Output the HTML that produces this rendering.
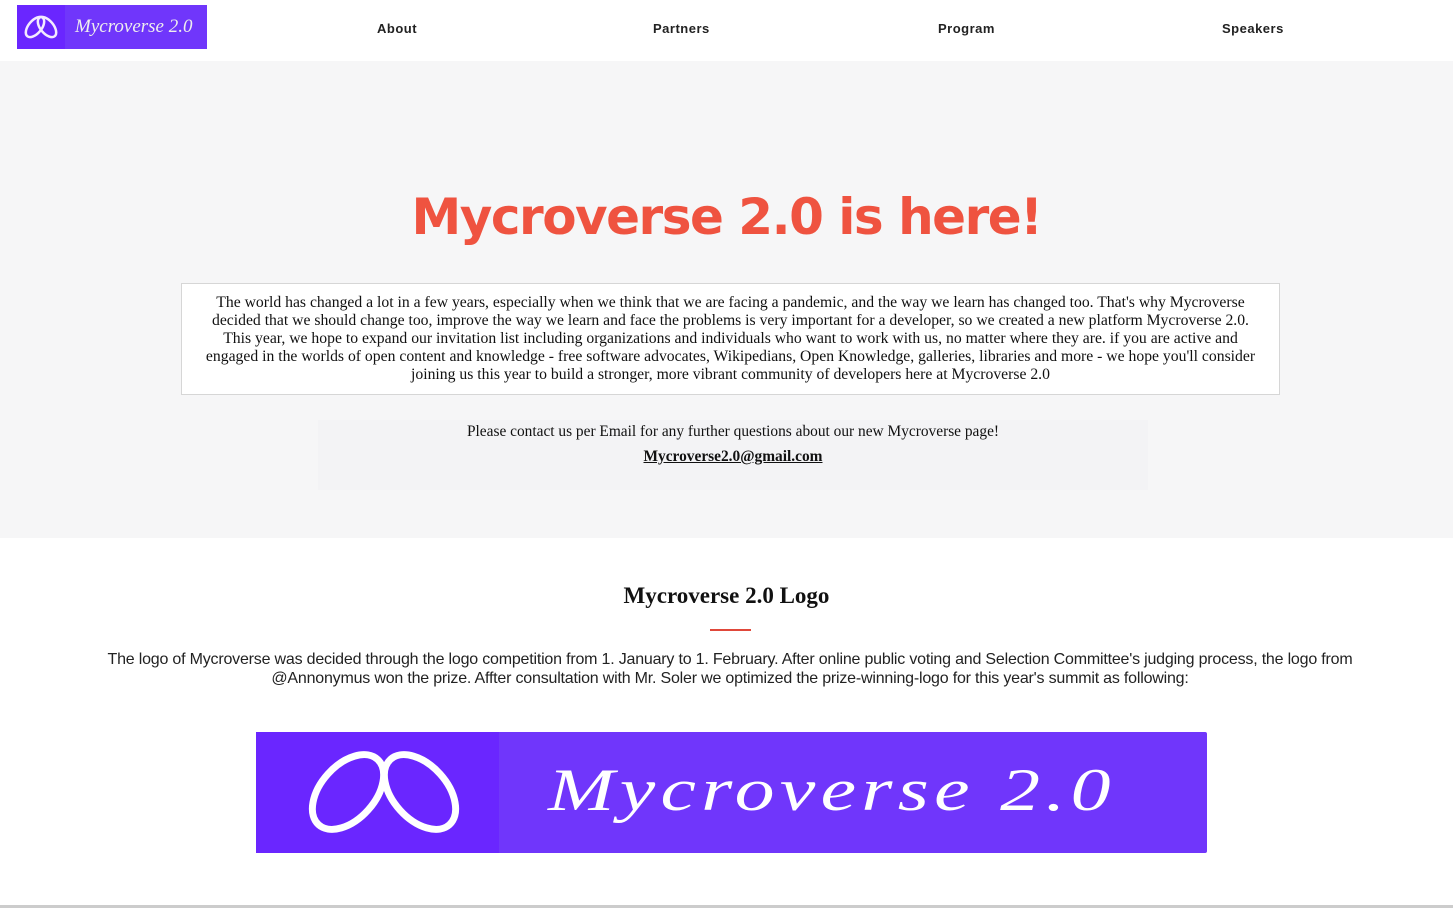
<!DOCTYPE html>
<html><head><meta charset="utf-8"><style>
body{margin:0;width:1453px;height:909px;overflow:hidden;background:#fff;font-family:"Liberation Serif",serif;position:relative}
.nav{position:absolute;top:0;left:0;width:1453px;height:60px;background:#fff}
.nav a{position:absolute;top:21px;font:bold 13px "Liberation Sans",sans-serif;color:#222;letter-spacing:.5px;text-decoration:none}
.logo{position:absolute;left:17px;top:5px;width:190px;height:44px;background:#7036fb}
.logo .l{position:absolute;left:0;top:0;width:48px;height:44px;background:#6a26ff}
.logo span{position:absolute;left:58px;top:11px;color:#eee;font:italic 19px "Liberation Serif",serif}
.hero{position:absolute;top:61px;left:0;width:1453px;height:477px;background:#f6f6f7}
h1{position:absolute;top:188px;left:0;width:1453px;text-align:center;margin:0;font:bold 50px "DejaVu Sans",sans-serif;color:#ef5340;letter-spacing:-1.5px}
.box{position:absolute;left:181px;top:283px;width:1099px;height:112px;background:#fff;border:1px solid #d6d6d6;text-align:center;font-size:15.7px;line-height:18px;color:#111;padding-top:10px;box-sizing:border-box;padding-left:16px;padding-right:16px}
.contact{position:absolute;left:318px;top:420px;width:830px;height:70px;background:#f3f3f5;text-align:center;font-size:15.4px;color:#111}
h2{position:absolute;top:583px;width:1453px;text-align:center;margin:0;font:bold 23px "Liberation Serif",serif;color:#111}
.rule{position:absolute;left:710px;top:629px;width:41px;height:2px;background:#e0483a}
.p{position:absolute;top:650px;left:70px;width:1320px;text-align:center;font:16px/19px "Liberation Sans",sans-serif;color:#222;letter-spacing:-0.2px}
.big{position:absolute;left:256px;top:732px;width:951px;height:121px;background:#7036fb;border-radius:2px}
.big .l{position:absolute;left:0;top:0;width:243px;height:121px;background:#6a26ff}
.big span{position:absolute;left:292px;top:24px;color:#fff;font:italic 60px "Liberation Serif",serif;letter-spacing:4px;transform:scaleX(1.33);transform-origin:left}
.bot{position:absolute;left:0;top:905px;width:1453px;height:3px;background:#ccc}
</style></head><body>
<div class="nav">
<div class="logo"><div class="l"><svg width="48" height="44" viewBox="0 0 48 44"><g fill="none" stroke="#f3eaff" stroke-width="2.5"><ellipse cx="18" cy="22" rx="6.5" ry="12" transform="rotate(40 18 22)"/><ellipse cx="30" cy="22" rx="6.5" ry="12" transform="rotate(-40 30 22)"/></g></svg></div><span>Mycroverse 2.0</span></div>
<a style="left:377px">About</a><a style="left:653px">Partners</a><a style="left:938px">Program</a><a style="left:1222px">Speakers</a>
</div>
<div class="hero"></div>
<h1>Mycroverse 2.0 is here!</h1>
<div class="box">The world has changed a lot in a few years, especially when we think that we are facing a pandemic, and the way we learn has changed too. That's why Mycroverse decided that we should change too, improve the way we learn and face the problems is very important for a developer, so we created a new platform Mycroverse 2.0. This year, we hope to expand our invitation list including organizations and individuals who want to work with us, no matter where they are. if you are active and engaged in the worlds of open content and knowledge - free software advocates, Wikipedians, Open Knowledge, galleries, libraries and more - we hope you'll consider joining us this year to build a stronger, more vibrant community of developers here at Mycroverse 2.0</div>
<div class="contact"><div style="padding-top:3px">Please contact us per Email for any further questions about our new Mycroverse page!</div><div style="margin-top:7px;font-weight:bold;text-decoration:underline">Mycroverse2.0@gmail.com</div></div>
<h2>Mycroverse 2.0 Logo</h2>
<div class="rule"></div>
<div class="p">The logo of Mycroverse was decided through the logo competition from 1. January to 1. February. After online public voting and Selection Committee's judging process, the logo from @Annonymus won the prize. Affter consultation with Mr. Soler we optimized the prize-winning-logo for this year's summit as following:</div>
<div class="big"><div class="l"><svg width="243" height="121" viewBox="0 0 243 121"><g fill="none" stroke="#fff" stroke-width="7"><ellipse cx="92" cy="60" rx="27" ry="44" transform="rotate(42 92 60)"/><ellipse cx="164" cy="60" rx="27" ry="44" transform="rotate(-42 164 60)"/></g></svg></div><span>Mycroverse 2.0</span></div>
<div class="bot"></div>
</body></html>
